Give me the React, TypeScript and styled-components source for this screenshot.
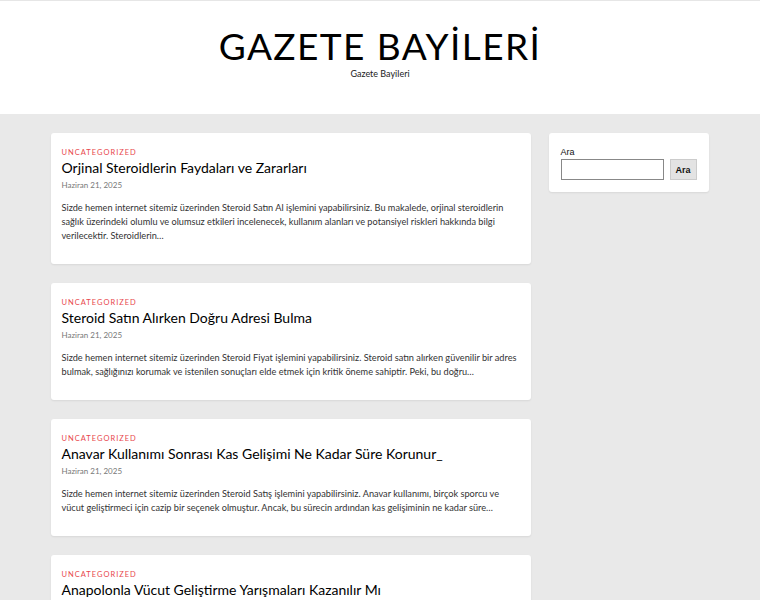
import { createGlobalStyle, styled } from "styled-components";

const GlobalStyle = createGlobalStyle`
  body {
    margin: 0;
    background: #e9e9e9;
    font-family: "Lato", "Noto Sans", sans-serif;
    color: #111;
  }
`;

const Header = styled.header`
  height: 113px;
  background: #fff;
  border-top: 1px solid #e6e6e6;
  display: flex;
  flex-direction: column;
  align-items: center;
`;

const SiteTitle = styled.h1`
  margin: 28px 0 0;
  font-family: "Lato", sans-serif;
  font-weight: 400;
  font-size: 37px;
  line-height: 34px;
  letter-spacing: 1.4px;
  color: #000;
`;

const Tagline = styled.div`
  margin-top: 5px;
  font-size: 9px;
  line-height: 11px;
  color: #222;
`;

const Layout = styled.div`
  width: 659px;
  margin: 19px auto 0;
  display: flex;
  gap: 18px;
  align-items: flex-start;
`;

const Main = styled.main`
  width: 480px;
  display: flex;
  flex-direction: column;
  gap: 19px;
`;

const Card = styled.article`
  background: #fff;
  border-radius: 3px;
  box-shadow: 0 1px 2px rgba(0, 0, 0, 0.08);
  padding: 14px 11px 21px;
`;

const Category = styled.div`
  font-size: 7.5px;
  line-height: 12px;
  letter-spacing: 1px;
  color: #e8474c;
  text-transform: uppercase;
`;

const PostTitle = styled.h2`
  margin: 0;
  font-size: 14px;
  line-height: 18px;
  font-weight: 400;
  color: #000;
`;

const PostDate = styled.div`
  margin-top: 1px;
  font-size: 8px;
  line-height: 14px;
  color: #777;
`;

const Excerpt = styled.p`
  margin: 9px 0 0;
  font-size: 9.2px;
  line-height: 14px;
  color: #333;
`;

const Sidebar = styled.aside`
  width: 160px;
  background: #fff;
  border-radius: 3px;
  box-shadow: 0 1px 2px rgba(0, 0, 0, 0.08);
  padding: 13px 12px 12px;
  box-sizing: border-box;
`;

const SearchLabel = styled.label`
  display: block;
  font-family: "Liberation Sans", Arial, sans-serif;
  font-size: 9px;
  line-height: 12px;
  color: #111;
`;

const SearchRow = styled.div`
  display: flex;
  gap: 6px;
  margin-top: 1px;
`;

const SearchInput = styled.input`
  width: 103px;
  height: 21px;
  box-sizing: border-box;
  border: 1px solid #888;
  padding: 0 4px;
  outline: none;
`;

const SearchButton = styled.button`
  height: 21px;
  width: 28px;
  padding: 0;
  box-sizing: border-box;
  border: 1px solid #ccc;
  background: #e3e3e3;
  font-family: "Liberation Sans", Arial, sans-serif;
  font-size: 9px;
  font-weight: 700;
  color: #111;
`;

const posts = [
  {
    title: "Orjinal Steroidlerin Faydaları ve Zararları",
    excerpt:
      "Sizde hemen internet sitemiz üzerinden Steroid Satın Al işlemini yapabilirsiniz. Bu makalede, orjinal steroidlerin sağlık üzerindeki olumlu ve olumsuz etkileri incelenecek, kullanım alanları ve potansiyel riskleri hakkında bilgi verilecektir. Steroidlerin…",
  },
  {
    title: "Steroid Satın Alırken Doğru Adresi Bulma",
    excerpt:
      "Sizde hemen internet sitemiz üzerinden Steroid Fiyat işlemini yapabilirsiniz. Steroid satın alırken güvenilir bir adres bulmak, sağlığınızı korumak ve istenilen sonuçları elde etmek için kritik öneme sahiptir. Peki, bu doğru…",
  },
  {
    title: "Anavar Kullanımı Sonrası Kas Gelişimi Ne Kadar Süre Korunur_",
    excerpt:
      "Sizde hemen internet sitemiz üzerinden Steroid Satış işlemini yapabilirsiniz. Anavar kullanımı, birçok sporcu ve vücut geliştirmeci için cazip bir seçenek olmuştur. Ancak, bu sürecin ardından kas gelişiminin ne kadar süre…",
  },
  {
    title: "Anapolonla Vücut Geliştirme Yarışmaları Kazanılır Mı",
    excerpt:
      "Sizde hemen internet sitemiz üzerinden Steroid Satın Al işlemini yapabilirsiniz. Anapolon, vücut geliştirme dünyasında sıkça tercih edilen bir steroid türüdür.",
  },
];

const App = () => {
  return (
    <>
      <GlobalStyle />
      <Header>
        <SiteTitle>GAZETE BAYİLERİ</SiteTitle>
        <Tagline>Gazete Bayileri</Tagline>
      </Header>
      <Layout>
        <Main>
          {posts.map((post) => (
            <Card key={post.title}>
              <Category>Uncategorized</Category>
              <PostTitle>{post.title}</PostTitle>
              <PostDate>Haziran 21, 2025</PostDate>
              <Excerpt>{post.excerpt}</Excerpt>
            </Card>
          ))}
        </Main>
        <Sidebar>
          <SearchLabel htmlFor="s">Ara</SearchLabel>
          <SearchRow>
            <SearchInput id="s" type="text" />
            <SearchButton type="button">Ara</SearchButton>
          </SearchRow>
        </Sidebar>
      </Layout>
    </>
  );
};

export default App;
